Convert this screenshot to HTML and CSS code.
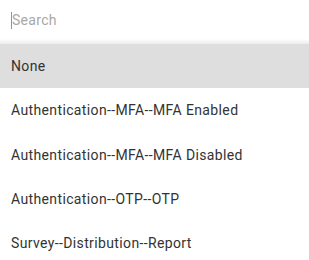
FILE: index.html
```html
<!DOCTYPE html>
<html lang="en">
<head>
    <meta charset="UTF-8">
    <title>Select</title>
    <link rel="stylesheet" href="styles.css">
</head>
<body>
    <div class="dropdown">
        <div class="search">
            <span class="caret"></span>
            <span class="placeholder">Search</span>
        </div>
        <ul class="options">
            <li class="active">None</li>
            <li>Authentication--MFA--MFA Enabled</li>
            <li>Authentication--MFA--MFA Disabled</li>
            <li>Authentication--OTP--OTP</li>
            <li>Survey--Distribution--Report</li>
        </ul>
    </div>
</body>
</html>
```

FILE: styles.css
```css
body {
    margin: 0;
    background-color: #fff;
    font-family: Roboto, "Liberation Sans", sans-serif;
}
.dropdown {
    width: 309px;
}
.search {
    height: 44px;
    display: flex;
    align-items: center;
    padding-left: 11px;
    padding-bottom: 4px;
    box-sizing: border-box;
    background: linear-gradient(to bottom, #fff 0, #fff 39px, #ececec 44px);
}
.caret {
    width: 1px;
    height: 17px;
    background-color: #3cb6c6;
}
.placeholder {
    font-size: 14px;
    letter-spacing: 0.3px;
    color: #a8a8a8;
}
.options {
    list-style: none;
    margin: 0;
    padding: 0;
}
.options li {
    height: 44.25px;
    display: flex;
    align-items: center;
    padding-left: 11px;
    font-size: 14px;
    letter-spacing: 0.37px;
    color: #333;
}
.options li.active {
    background-color: #dedede;
}
```
